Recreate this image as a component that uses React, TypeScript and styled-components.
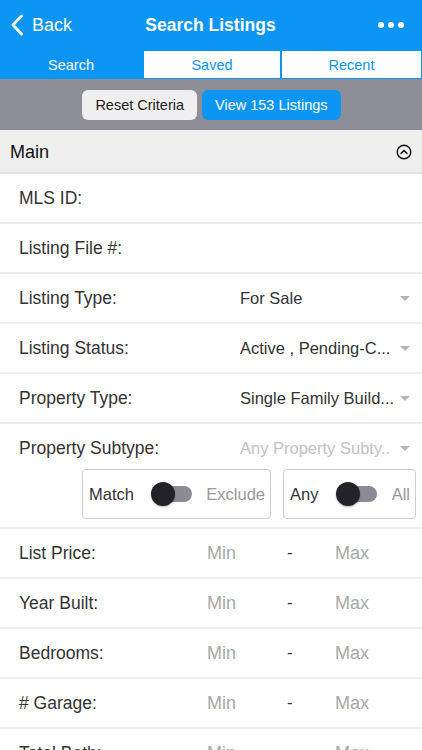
import React from "react";
import styled, { createGlobalStyle } from "styled-components";

const Global = createGlobalStyle`
  html, body { margin: 0; padding: 0; background: #fff; }
  body { font-family: "Liberation Sans", Arial, sans-serif; -webkit-font-smoothing: antialiased; }
  * { box-sizing: border-box; }
`;

const BLUE = "#0c95f3";

const Page = styled.div`
  width: 422px;
  height: 750px;
  overflow: hidden;
  background: #fff;
`;

const NavBar = styled.div`
  height: 50px;
  background: ${BLUE};
  display: grid;
  grid-template-columns: 1fr auto 1fr;
  align-items: center;
  color: #fff;
  padding: 0 12px 0 11px;
`;

const BackBtn = styled.div`
  display: flex;
  align-items: center;
  gap: 9px;
  font-size: 18px;
`;

const Title = styled.div`
  font-size: 17.5px;
  font-weight: bold;
`;

const Dots = styled.div`
  justify-self: end;
  display: flex;
  gap: 4px;
  padding-right: 6px;
`;

const Dot = styled.span`
  width: 6px;
  height: 6px;
  border-radius: 50%;
  background: #fff;
`;

const Tabs = styled.div`
  height: 29px;
  background: ${BLUE};
  display: grid;
  grid-template-columns: 142px 136px 1fr;
  gap: 2px;
  padding: 1px 1px 1px 0;
`;

const Tab = styled.div<{ $active?: boolean }>`
  display: flex;
  align-items: center;
  justify-content: center;
  font-size: 14.5px;
  background: ${(p) => (p.$active ? BLUE : "#fff")};
  color: ${(p) => (p.$active ? "#fff" : BLUE)};
`;

const ActionBar = styled.div`
  height: 51px;
  background: #8d8e97;
  display: flex;
  justify-content: center;
  align-items: center;
  gap: 5px;
  padding-left: 1px;
`;

const Btn = styled.div<{ $primary?: boolean }>`
  height: 30px;
  border-radius: 6px;
  padding: 0 13px;
  display: flex;
  align-items: center;
  font-size: 14.5px;
  background: ${(p) => (p.$primary ? BLUE : "#efefef")};
  color: ${(p) => (p.$primary ? "#fff" : "#1c1c1c")};
`;

const SectionHead = styled.div`
  height: 44px;
  background: #efefef;
  display: flex;
  align-items: center;
  justify-content: space-between;
  padding: 2px 10px 0 10px;
  font-size: 18px;
  color: #111;
  border-bottom: 2px solid #e4e4e4;
`;

const Row = styled.div`
  height: 50px;
  display: flex;
  align-items: center;
  padding: 0 12px 0 19px;
  border-bottom: 2px solid #ececec;
  color: #333;
`;

const Label = styled.div<{ $w?: number }>`
  width: ${(p) => p.$w ?? 221}px;
  flex-shrink: 0;
  font-size: 17.5px;
`;

const Value = styled.div<{ $placeholder?: boolean }>`
  flex: 1;
  font-size: 16.5px;
  color: ${(p) => (p.$placeholder ? "#c2c2c2" : "#333")};
  white-space: nowrap;
  overflow: hidden;
`;

const Caret = styled.span`
  width: 0;
  height: 0;
  border-left: 5px solid transparent;
  border-right: 5px solid transparent;
  border-top: 5px solid #b5b5b5;
  margin-left: 6px;
`;

const SubtypeBlock = styled.div`
  border-bottom: 2px solid #ececec;
  padding: 0 6px 8px 19px;
  color: #333;
`;

const SubtypeTop = styled.div`
  height: 45px;
  display: flex;
  align-items: center;
  padding: 3px 6px 0 0;
`;

const ToggleRow = styled.div`
  display: flex;
  justify-content: flex-end;
  gap: 12px;
`;

const ToggleBox = styled.div<{ $w: number }>`
  width: ${(p) => p.$w}px;
  height: 50px;
  border: 1px solid #cfcfcf;
  border-radius: 4px;
  display: flex;
  align-items: center;
  justify-content: space-between;
  padding: 0 5px 0 6px;
  font-size: 16.5px;
`;

const Track = styled.div`
  width: 40px;
  height: 16px;
  border-radius: 8px;
  background: #8b8b96;
  position: relative;
  margin-left: 4px;
`;

const Knob = styled.div`
  position: absolute;
  left: -1px;
  top: -4px;
  width: 24px;
  height: 24px;
  border-radius: 50%;
  background: #222228;
  box-shadow: 0 1px 2px rgba(0,0,0,0.3);
`;

const Muted = styled.span`
  color: #999;
`;

const RangeCell = styled.div<{ $w: number }>`
  width: ${(p) => p.$w}px;
  color: #a8a8a8;
  font-size: 18px;
`;

const Dash = styled.div`
  width: 48px;
  color: #333;
  font-size: 17px;
`;

const Selects: [string, string][] = [
  ["Listing Type:", "For Sale"],
  ["Listing Status:", "Active , Pending-C..."],
  ["Property Type:", "Single Family Build..."],
];

const Ranges = ["List Price:", "Year Built:", "Bedrooms:", "# Garage:", "Total Bath:"];

export default function App() {
  return (
    <Page>
      <Global />
      <NavBar>
        <BackBtn>
          <svg width="12" height="22" viewBox="0 0 12 22">
            <path d="M10.5 2 L2 11 L10.5 20" fill="none" stroke="#fff" strokeWidth="2.8" strokeLinecap="round" strokeLinejoin="round" />
          </svg>
          Back
        </BackBtn>
        <Title>Search Listings</Title>
        <Dots>
          <Dot />
          <Dot />
          <Dot />
        </Dots>
      </NavBar>
      <Tabs>
        <Tab $active>Search</Tab>
        <Tab>Saved</Tab>
        <Tab>Recent</Tab>
      </Tabs>
      <ActionBar>
        <Btn>Reset Criteria</Btn>
        <Btn $primary>View 153 Listings</Btn>
      </ActionBar>
      <SectionHead>
        Main
        <svg width="16" height="16" viewBox="0 0 16 16">
          <circle cx="8" cy="8" r="6.8" fill="none" stroke="#111" strokeWidth="1.4" />
          <path d="M5 9.5 L8 6.5 L11 9.5" fill="none" stroke="#111" strokeWidth="1.5" strokeLinecap="round" strokeLinejoin="round" />
        </svg>
      </SectionHead>
      <Row>
        <Label>MLS ID:</Label>
      </Row>
      <Row>
        <Label>Listing File #:</Label>
      </Row>
      {Selects.map(([l, v]) => (
        <Row key={l}>
          <Label>{l}</Label>
          <Value>{v}</Value>
          <Caret />
        </Row>
      ))}
      <SubtypeBlock>
        <SubtypeTop>
          <Label>Property Subtype:</Label>
          <Value $placeholder>Any Property Subty..</Value>
          <Caret />
        </SubtypeTop>
        <ToggleRow>
          <ToggleBox $w={189}>
            Match
            <Track>
              <Knob />
            </Track>
            <Muted>Exclude</Muted>
          </ToggleBox>
          <ToggleBox $w={133}>
            Any
            <Track>
              <Knob />
            </Track>
            <Muted>All</Muted>
          </ToggleBox>
        </ToggleRow>
      </SubtypeBlock>
      {Ranges.map((l) => (
        <Row key={l}>
          <Label $w={188}>{l}</Label>
          <RangeCell $w={80}>Min</RangeCell>
          <Dash>-</Dash>
          <RangeCell $w={60}>Max</RangeCell>
        </Row>
      ))}
    </Page>
  );
}
